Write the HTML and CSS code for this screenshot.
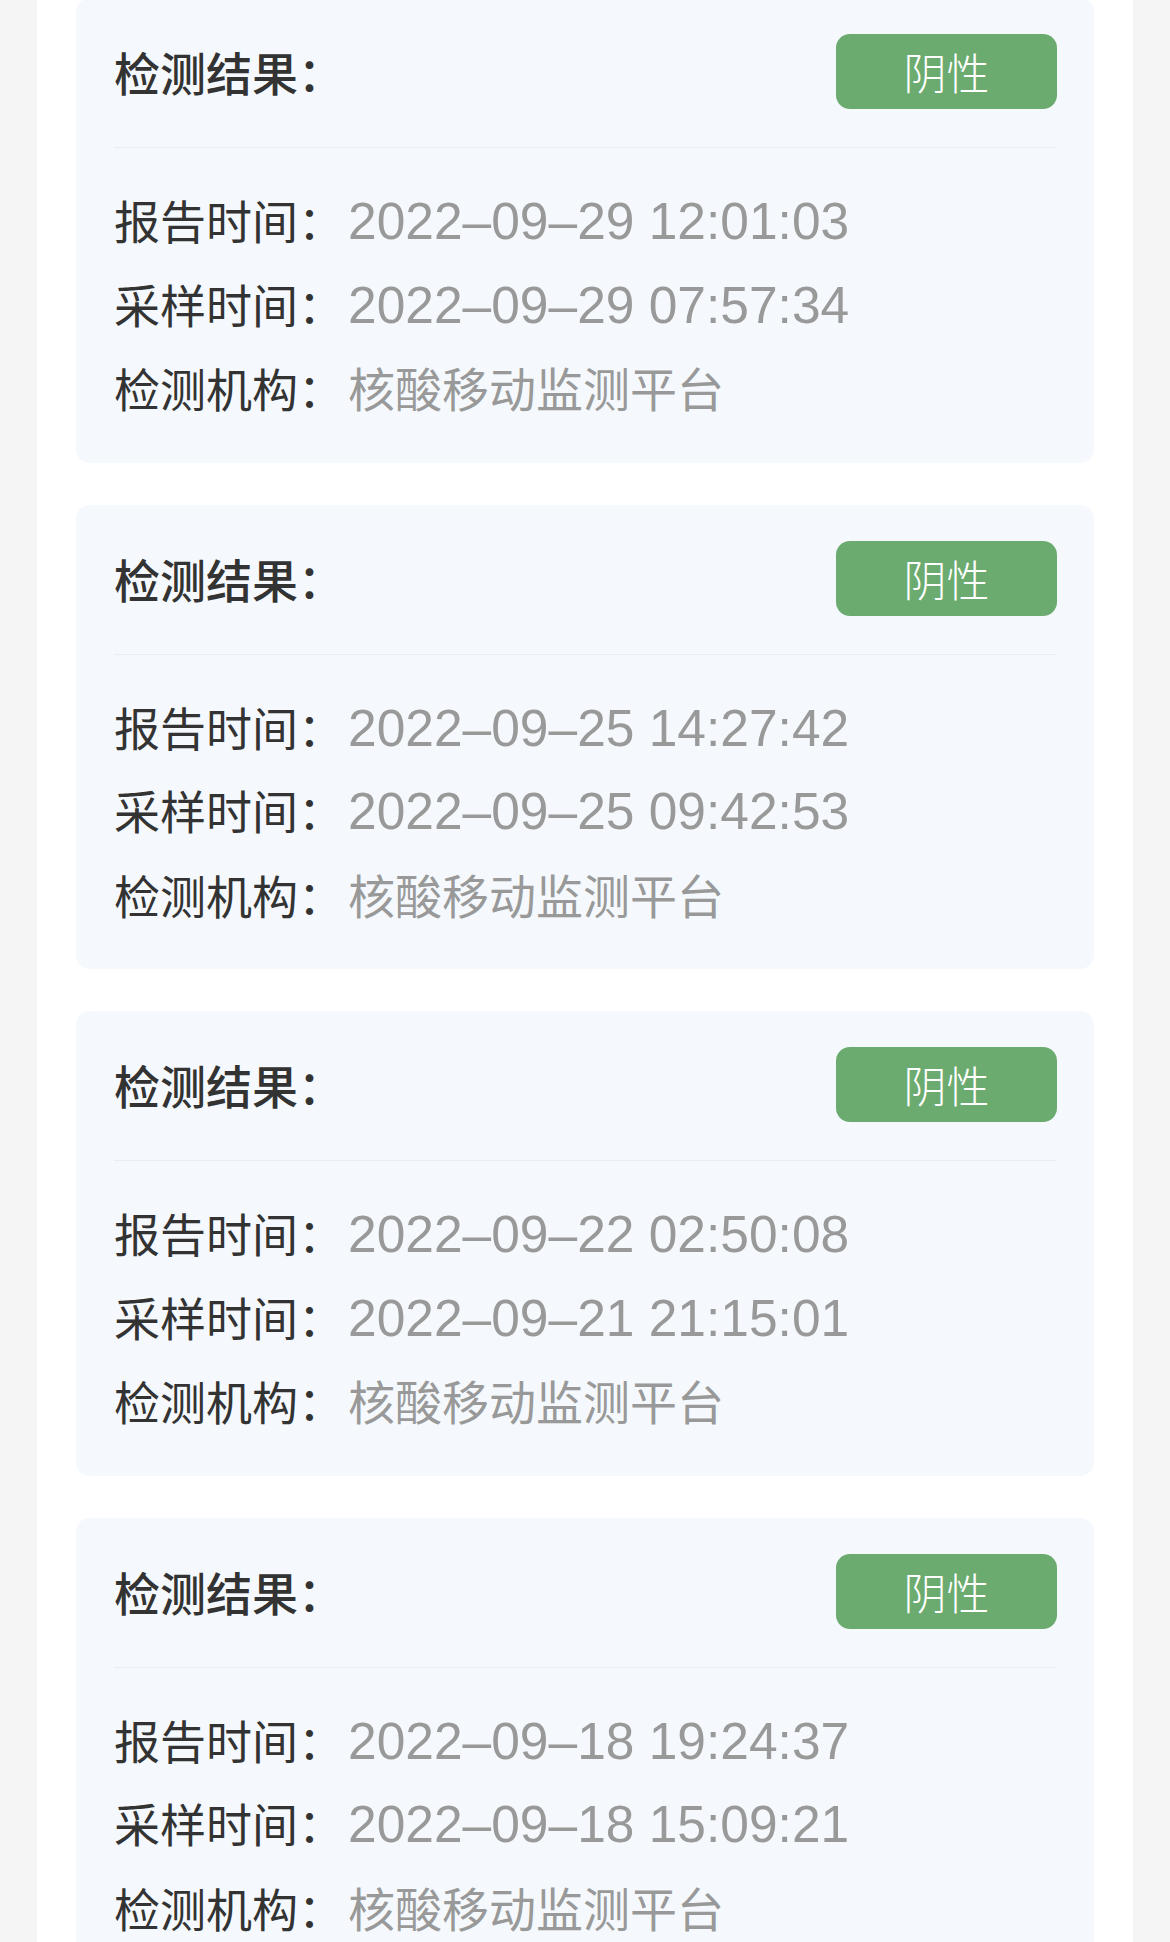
FILE: index.html
```html
<!DOCTYPE html>
<html>
<head>
    <meta charset="utf-8">
    <title>核酸检测记录</title>
    <link rel="stylesheet" href="styles.css">
</head>
<body>
    <div class="panel">
        <div class="card">
            <div class="card-head">
                <span class="title">检测结果：</span>
                <span class="badge">阴性</span>
            </div>
            <div class="row"><span class="label">报告时间：</span><span class="value">2022–09–29 12:01:03</span></div>
            <div class="row"><span class="label">采样时间：</span><span class="value">2022–09–29 07:57:34</span></div>
            <div class="row"><span class="label">检测机构：</span><span class="value org">核酸移动监测平台</span></div>
        </div>

        <div class="card">
            <div class="card-head">
                <span class="title">检测结果：</span>
                <span class="badge">阴性</span>
            </div>
            <div class="row"><span class="label">报告时间：</span><span class="value">2022–09–25 14:27:42</span></div>
            <div class="row"><span class="label">采样时间：</span><span class="value">2022–09–25 09:42:53</span></div>
            <div class="row"><span class="label">检测机构：</span><span class="value org">核酸移动监测平台</span></div>
        </div>

        <div class="card">
            <div class="card-head">
                <span class="title">检测结果：</span>
                <span class="badge">阴性</span>
            </div>
            <div class="row"><span class="label">报告时间：</span><span class="value">2022–09–22 02:50:08</span></div>
            <div class="row"><span class="label">采样时间：</span><span class="value">2022–09–21 21:15:01</span></div>
            <div class="row"><span class="label">检测机构：</span><span class="value org">核酸移动监测平台</span></div>
        </div>

        <div class="card">
            <div class="card-head">
                <span class="title">检测结果：</span>
                <span class="badge">阴性</span>
            </div>
            <div class="row"><span class="label">报告时间：</span><span class="value">2022–09–18 19:24:37</span></div>
            <div class="row"><span class="label">采样时间：</span><span class="value">2022–09–18 15:09:21</span></div>
            <div class="row"><span class="label">检测机构：</span><span class="value org">核酸移动监测平台</span></div>
        </div>
    </div>
</body>
</html>
```

FILE: styles.css
```css
body {
    margin: 0;
    padding: 0;
    background: #f5f5f5;
    font-family: "Noto Sans CJK SC", sans-serif;
    overflow: hidden;
}
.panel {
    width: 1018px;
    margin: -2px 0 0 37px;
    padding: 0 39px;
    min-height: 2000px;
    background: #fff;
    display: flex;
    flex-direction: column;
    gap: 42px;
}
.card {
    background: #f5f9fd;
    border-radius: 14px;
    padding: 0 37px 34px 38px;
}
.card-head {
    display: flex;
    justify-content: space-between;
    align-items: center;
    padding: 36px 0 38px;
    border-bottom: 1px solid #e9eef3;
    margin-bottom: 30px;
}
.title {
    font-size: 46px;
    font-weight: 500;
    color: #333;
    line-height: 75px;
}
.badge {
    width: 221px;
    height: 75px;
    line-height: 75px;
    text-align: center;
    background: #6bab6f;
    border-radius: 14px;
    color: #fff;
    font-size: 43px;
    font-weight: 300;
}
.row {
    display: flex;
    align-items: baseline;
    height: 83.5px;
}
.label {
    font-size: 46px;
    line-height: 83.5px;
    color: #333;
}
.value {
    margin-left: 4px;
    font-family: "Liberation Sans", "Noto Sans CJK SC", sans-serif;
    font-size: 51.5px;
    line-height: 83.5px;
    color: #999;
}
.value.org {
    font-family: "Noto Sans CJK SC", sans-serif;
    font-size: 47px;
}
```
